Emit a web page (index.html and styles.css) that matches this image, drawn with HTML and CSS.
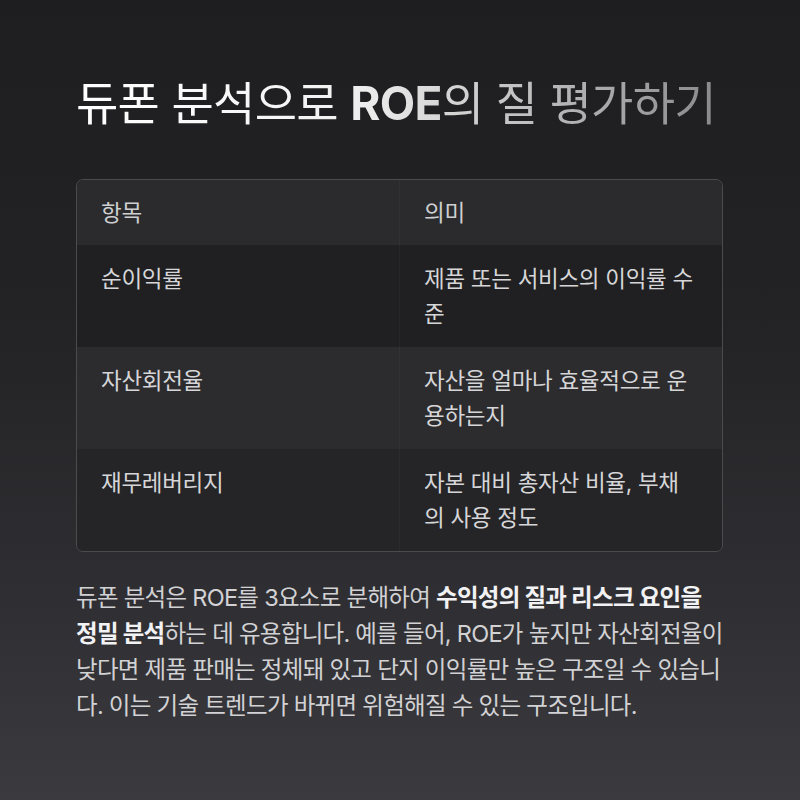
FILE: index.html
```html
<!DOCTYPE html>
<html lang="ko">
<head>
    <meta charset="UTF-8">
    <meta name="viewport" content="width=device-width, initial-scale=1.0">
    <title>듀폰 분석으로 ROE의 질 평가하기</title>
    <link rel="stylesheet" href="styles.css">
</head>
<body>
    <div class="slide">
        <h1 class="title">듀폰 분석으로 <span class="latin">ROE</span>의 질 평가하기</h1>

        <div class="table-wrap">
            <table class="info-table">
                <thead>
                    <tr>
                        <th>항목</th>
                        <th>의미</th>
                    </tr>
                </thead>
                <tbody>
                    <tr class="dark">
                        <td>순이익률</td>
                        <td>제품 또는 서비스의 이익률 수준</td>
                    </tr>
                    <tr class="light">
                        <td>자산회전율</td>
                        <td>자산을 얼마나 효율적으로 운용하는지</td>
                    </tr>
                    <tr class="mid">
                        <td>재무레버리지</td>
                        <td>자본 대비 총자산 비율, 부채의 사용 정도</td>
                    </tr>
                </tbody>
            </table>
        </div>

        <p class="summary">듀폰 분석은 ROE를 3요소로 분해하여 <strong>수익성의 질과 리스크 요인을 정밀 분석</strong>하는 데 유용합니다. 예를 들어, ROE가 높지만 자산회전율이 낮다면 제품 판매는 정체돼 있고 단지 이익률만 높은 구조일 수 있습니다. 이는 기술 트렌드가 바뀌면 위험해질 수 있는 구조입니다.</p>
    </div>
</body>
</html>
```

FILE: styles.css
```css
html, body {
    margin: 0;
    padding: 0;
}

body {
    width: 800px;
    height: 800px;
    background: linear-gradient(180deg, #1e1e20 0%, #232326 40%, #2f2f33 75%, #3a3a3f 100%);
    font-family: "Inter", "Noto Sans CJK KR", sans-serif;
    color: #d6d6d8;
    overflow: hidden;
}

.slide {
    padding: 72px 77px 0 76px;
    display: flex;
    flex-direction: column;
}

.title {
    margin: 0;
    font-size: 46px;
    font-weight: 400;
    line-height: 62px;
    letter-spacing: -0.7px;
    background: linear-gradient(90deg, #ffffff 0%, #f2f2f2 42%, #8a8a8c 100%);
    -webkit-background-clip: text;
    background-clip: text;
    color: transparent;
    align-self: flex-start;
}

.title .latin {
    font-weight: 700;
}

.table-wrap {
    margin-top: 45px;
    border: 1px solid #4b4b4f;
    border-radius: 7px;
    overflow: hidden;
}

.info-table {
    width: 100%;
    border-collapse: collapse;
    table-layout: fixed;
    font-size: 22.5px;
    line-height: 35px;
    letter-spacing: -0.3px;
}

.info-table th,
.info-table td {
    text-align: left;
    vertical-align: top;
    font-weight: 400;
    padding: 15px 24px;
    word-break: break-all;
}

.info-table th + th,
.info-table td + td {
    border-left: 1px solid rgba(255, 255, 255, 0.03);
}

.info-table thead tr {
    background: #2b2b2e;
    color: #cfcfd1;
}

.info-table tbody td {
    padding-top: 16px;
    padding-bottom: 16px;
}

.info-table tr.dark {
    background: #202022;
}

.info-table tr.light {
    background: #2c2c2f;
}

.info-table tr.mid {
    background: #252528;
}

.summary {
    margin: 28px 0 0;
    font-size: 23.5px;
    line-height: 36px;
    letter-spacing: -0.72px;
    color: #d2d2d4;
    word-break: break-all;
}

.summary strong {
    font-weight: 700;
    color: #f2f2f4;
}
```
